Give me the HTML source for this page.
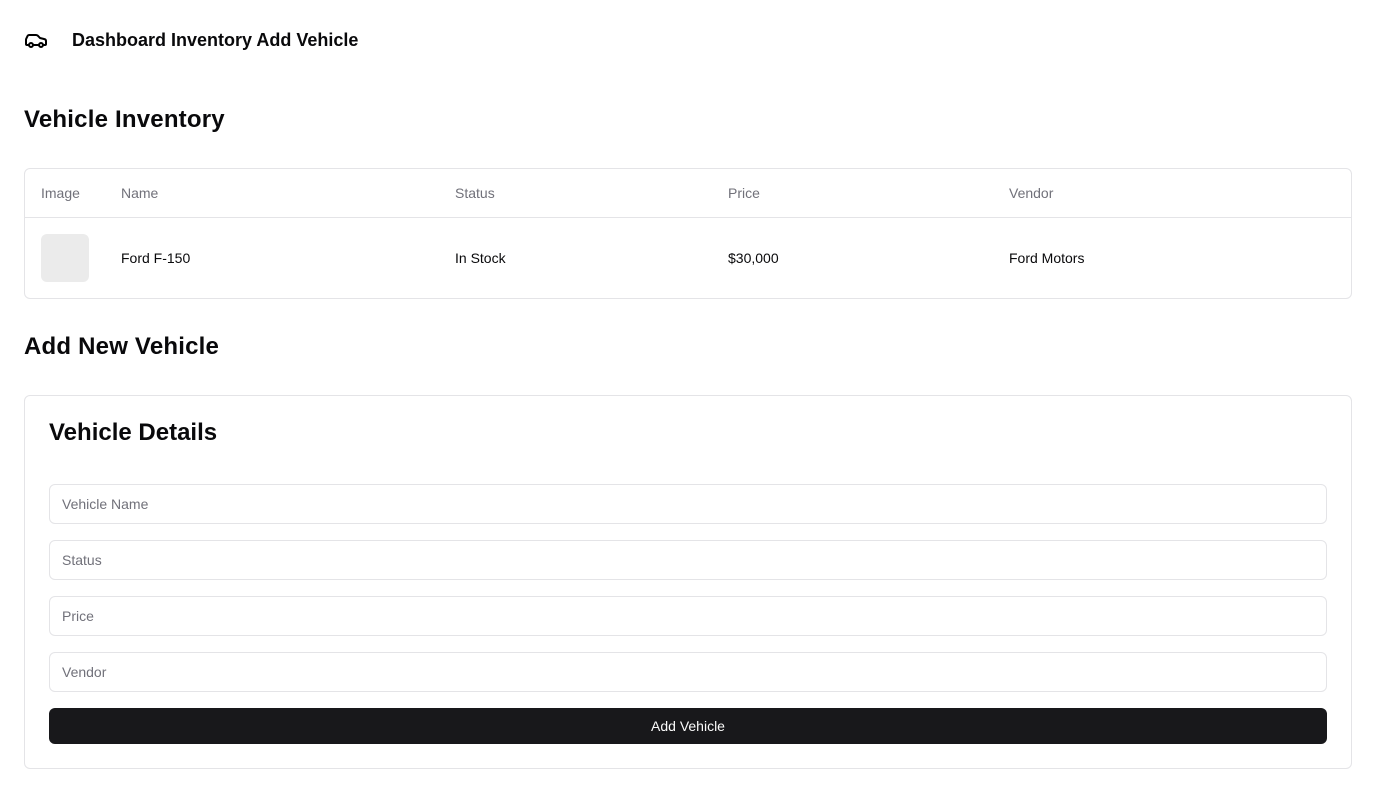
<!DOCTYPE html>
<html><head><style>
*{box-sizing:border-box;margin:0;padding:0}
body{width:1376px;height:793px;background:#fff;font-family:"Liberation Sans",sans-serif;color:#09090b;position:relative}
.a{position:absolute}
.th{position:absolute;top:185px;font-size:14px;color:#71717a}
.td{position:absolute;top:250px;font-size:14px;color:#09090b}
.in{position:absolute;left:49px;width:1278px;height:40px;border:1px solid #e4e4e7;border-radius:6px;font-size:14px;color:#71717a;padding:11px 12px}
</style></head><body>
<svg class="a" style="left:24px;top:28px" width="24" height="24" viewBox="0 0 24 24" fill="none" stroke="#000" stroke-width="2" stroke-linecap="round" stroke-linejoin="round"><path d="M19 17h2c.6 0 1-.4 1-1v-3c0-.9-.7-1.7-1.5-1.9C18.7 10.6 16 10 16 10s-1.3-1.4-2.2-2.3c-.5-.4-1.1-.7-1.8-.7H5c-.6 0-1.1.4-1.4.9l-1.4 2.9A3.7 3.7 0 0 0 2 12v4c0 .6.4 1 1 1h2"/><circle cx="7" cy="17" r="2"/><path d="M9 17h6"/><circle cx="17" cy="17" r="2"/></svg>
<div class="a" style="left:72px;top:30px;font-size:18px;font-weight:bold">Dashboard Inventory Add Vehicle</div>
<div class="a" style="left:24px;top:106px;font-size:24px;font-weight:bold;letter-spacing:0.2px">Vehicle Inventory</div>
<div class="a" style="left:24px;top:168px;width:1328px;height:131px;border:1px solid #e4e4e7;border-radius:6px"></div>
<div class="a" style="left:25px;top:217px;width:1326px;height:1px;background:#e4e4e7"></div>
<div class="th" style="left:41px">Image</div><div class="th" style="left:121px">Name</div><div class="th" style="left:455px">Status</div><div class="th" style="left:728px">Price</div><div class="th" style="left:1009px">Vendor</div>
<div class="a" style="left:41px;top:234px;width:48px;height:48px;background:#ebebeb;border-radius:6px"></div>
<div class="td" style="left:121px;font-weight:500">Ford F-150</div><div class="td" style="left:455px">In Stock</div><div class="td" style="left:728px">$30,000</div><div class="td" style="left:1009px">Ford Motors</div>
<div class="a" style="left:24px;top:333px;font-size:24px;font-weight:bold;letter-spacing:0.2px">Add New Vehicle</div>
<div class="a" style="left:24px;top:395px;width:1328px;height:374px;border:1px solid #e4e4e7;border-radius:6px"></div>
<div class="a" style="left:49px;top:419px;font-size:24px;font-weight:bold">Vehicle Details</div>
<div class="in" style="top:484px">Vehicle Name</div>
<div class="in" style="top:540px">Status</div>
<div class="in" style="top:596px">Price</div>
<div class="in" style="top:652px">Vendor</div>
<div class="a" style="left:49px;top:708px;width:1278px;height:36px;background:#18181b;border-radius:6px;color:#fafafa;font-size:14px;text-align:center;line-height:36px">Add Vehicle</div>
</body></html>
